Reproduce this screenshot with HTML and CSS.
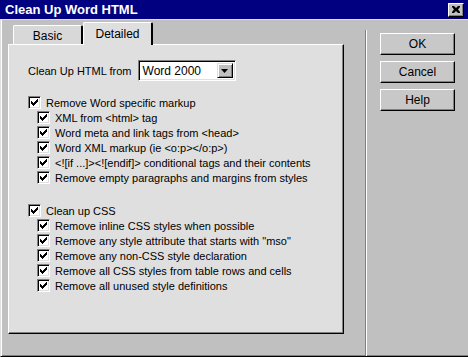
FILE: index.html
```html
<!DOCTYPE html>
<html lang="en">

<head>
  <meta charset="UTF-8">
  <title>Clean Up Word HTML</title>
  <link rel="stylesheet" href="styles.css">
</head>

<body>
  <div class="window">
    <div class="titlebar">
      <span class="title">Clean Up Word HTML</span>
      <button class="close" aria-label="Close">
        <svg width="8" height="7" viewBox="0 0 8 7">
          <path d="M0 0h2l2 2 2-2h2v1l-2 2.5 2 2.5v1h-2l-2-2-2 2h-2v-1l2-2.5-2-2.5z" fill="#000"/>
        </svg>
      </button>
    </div>

    <div class="main">
      <div class="tabset">
        <div class="tabstrip">
          <div class="tab">Basic</div>
          <div class="tab active">Detailed</div>
        </div>

        <div class="panel">
          <div class="source-row">
            <label>Clean Up HTML from</label>
            <div class="combo">
              <span class="combo-value">Word 2000</span>
              <span class="combo-btn">
                <svg width="7" height="4" viewBox="0 0 7 4"><path d="M0 0h7l-3.5 4z" fill="#000"/></svg>
              </span>
            </div>
          </div>

          <div class="group">
            <div class="check"><span class="box"></span>Remove Word specific markup</div>
            <div class="check sub"><span class="box"></span>XML from &lt;html&gt; tag</div>
            <div class="check sub"><span class="box"></span>Word meta and link tags from &lt;head&gt;</div>
            <div class="check sub"><span class="box"></span>Word XML markup (ie &lt;o:p&gt;&lt;/o:p&gt;)</div>
            <div class="check sub"><span class="box"></span>&lt;![if ...]&gt;&lt;![endif]&gt; conditional tags and their contents</div>
            <div class="check sub"><span class="box"></span>Remove empty paragraphs and margins from styles</div>
          </div>

          <div class="group">
            <div class="check"><span class="box"></span>Clean up CSS</div>
            <div class="check sub"><span class="box"></span>Remove inline CSS styles when possible</div>
            <div class="check sub"><span class="box"></span>Remove any style attribute that starts with "mso"</div>
            <div class="check sub"><span class="box"></span>Remove any non-CSS style declaration</div>
            <div class="check sub"><span class="box"></span>Remove all CSS styles from table rows and cells</div>
            <div class="check sub"><span class="box"></span>Remove all unused style definitions</div>
          </div>
        </div>
      </div>

      <div class="separator"></div>

      <div class="buttons">
        <button class="btn">OK</button>
        <button class="btn">Cancel</button>
        <button class="btn">Help</button>
      </div>
    </div>
  </div>
</body>

</html>
```

FILE: styles.css
```css
body {
  margin: 0;
  font-family: "Liberation Sans", Arial, sans-serif;
  font-size: 11px;
  color: #000;
  background-color: #c0c0c0;
}

.window {
  width: 468px;
  height: 357px;
  box-sizing: border-box;
  background-color: #c0c0c0;
  border-left: 1px solid #dfdfdf;
  border-bottom: 1px solid #000;
  box-shadow: inset 1px 0 0 #fff, inset 0 -1px 0 #808080;
  padding-left: 1px;
}

.titlebar {
  height: 19px;
  background-color: #000080;
  display: flex;
  align-items: center;
  padding: 0 4px 0 5px;
  margin-left: -2px;
  border-bottom: 1px solid #dfdfdf;
}

.title {
  color: #fff;
  font-weight: bold;
  font-size: 13px;
}

.close {
  margin-left: auto;
  width: 16px;
  height: 14px;
  padding: 0;
  background-color: #c0c0c0;
  border: 1px solid;
  border-color: #fff #000 #000 #fff;
  box-shadow: inset -1px -1px 0 #808080;
  display: flex;
  align-items: center;
  justify-content: center;
}

.main {
  display: flex;
  height: 336px;
}

.tabset {
  margin-left: 6px;
  padding-top: 2px;
  width: 336px;
}

.tabstrip {
  display: flex;
  align-items: flex-end;
  height: 22px;
  padding-left: 5px;
}

.tab {
  position: relative;
  height: 19px;
  width: 70px;
  box-sizing: border-box;
  background-color: #d8d8d8;
  border-top: 1px solid #fff;
  border-left: 1px solid #fff;
  border-right: 2px solid #000;
  border-radius: 2px 2px 0 0;
  display: flex;
  align-items: center;
  justify-content: center;
  padding-top: 1px;
  font-size: 12px;
}

.tab.active {
  height: 23px;
  margin-bottom: -1px;
  background-color: #dfdfdf;
  z-index: 1;
  padding-bottom: 2px;
}

.panel {
  height: 290px;
  box-sizing: border-box;
  background-color: #dfdfdf;
  border-top: 1px solid #fff;
  border-left: 1px solid #fff;
  border-right: 1px solid #000;
  border-bottom: 1px solid #000;
  box-shadow: inset -1px -1px 0 #808080;
  padding: 15px 0 0 19px;
}

.source-row {
  display: flex;
  align-items: center;
  gap: 6px;
  height: 21px;
}

.combo {
  width: 98px;
  height: 21px;
  box-sizing: border-box;
  background-color: #fff;
  border: 1px solid;
  border-color: #808080 #fff #fff #808080;
  box-shadow: inset 1px 1px 0 #000, inset -1px -1px 0 #dfdfdf;
  display: flex;
  align-items: center;
  padding: 2px;
}

.combo-value {
  flex: 1;
  padding-left: 2px;
  font-size: 12px;
}

.combo-btn {
  width: 16px;
  height: 15px;
  box-sizing: border-box;
  background-color: #c0c0c0;
  border: 1px solid;
  border-color: #dfdfdf #000 #000 #dfdfdf;
  box-shadow: inset 1px 1px 0 #fff, inset -1px -1px 0 #808080;
  display: flex;
  align-items: center;
  justify-content: center;
}

.group {
  margin-top: 14px;
}

.group + .group {
  margin-top: 18px;
}

.check {
  display: flex;
  align-items: center;
  height: 15px;
  white-space: nowrap;
}

.check.sub {
  padding-left: 9px;
}

.box {
  width: 13px;
  height: 13px;
  box-sizing: border-box;
  margin-right: 5px;
  border: 1px solid;
  border-color: #808080 #fff #fff #808080;
  box-shadow: inset 1px 1px 0 #000, inset -1px -1px 0 #dfdfdf;
  background: #fff url("data:image/svg+xml,%3Csvg xmlns='http://www.w3.org/2000/svg' width='11' height='11' shape-rendering='crispEdges'%3E%3Cpath d='M2 4h1v3h-1zM3 5h1v3h-1zM4 6h1v3h-1zM5 5h1v3h-1zM6 4h1v3h-1zM7 3h1v3h-1zM8 2h1v3h-1z' fill='%23000'/%3E%3C/svg%3E") no-repeat 0 0;
}

.separator {
  width: 1px;
  margin: 10px 0 0 21px;
  background-color: #808080;
  border-right: 1px solid #fff;
}

.buttons {
  display: flex;
  flex-direction: column;
  gap: 6px;
  padding: 13px 0 0 13px;
}

.btn {
  width: 75px;
  height: 22px;
  padding: 0;
  font-family: "Liberation Sans", Arial, sans-serif;
  font-size: 12px;
  color: #000;
  background-color: #c8c8c8;
  border: 1px solid;
  border-color: #fff #000 #000 #fff;
  box-shadow: inset -1px -1px 0 #808080;
}
```
